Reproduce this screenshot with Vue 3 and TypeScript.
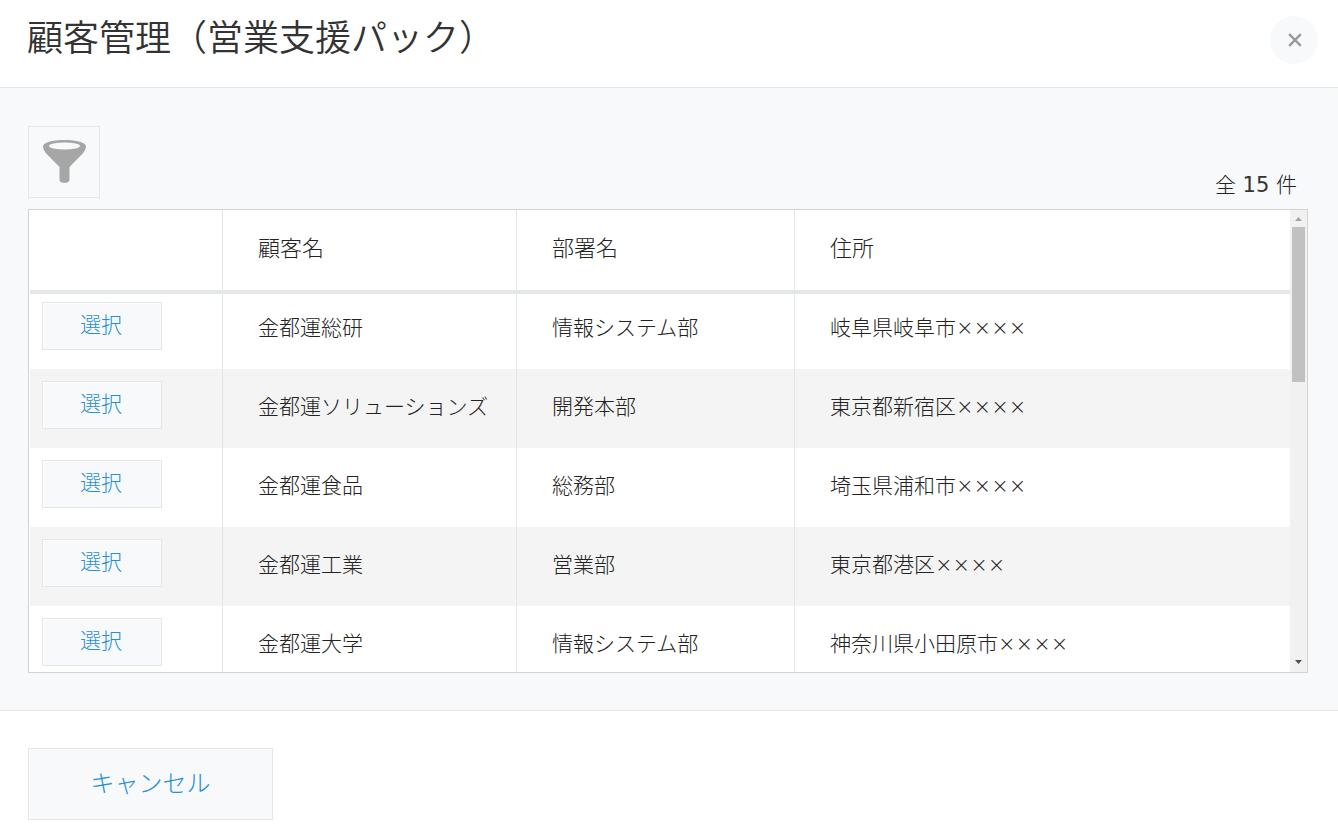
<script setup lang="ts">
interface Customer {
  name: string
  department: string
  address: string
}

const total = 15

const customers: Customer[] = [
  { name: '金都運総研', department: '情報システム部', address: '岐阜県岐阜市××××' },
  { name: '金都運ソリューションズ', department: '開発本部', address: '東京都新宿区××××' },
  { name: '金都運食品', department: '総務部', address: '埼玉県浦和市××××' },
  { name: '金都運工業', department: '営業部', address: '東京都港区××××' },
  { name: '金都運大学', department: '情報システム部', address: '神奈川県小田原市××××' },
]
</script>

<template>
  <div class="dialog">
    <header class="dialog-header">
      <h1 class="title">顧客管理（営業支援パック）</h1>
      <button class="close" type="button" aria-label="閉じる">
        <svg viewBox="0 0 14 14" width="14" height="14" aria-hidden="true">
          <path d="M1.2 1.2 L12.8 12.8 M12.8 1.2 L1.2 12.8" />
        </svg>
      </button>
    </header>

    <main class="dialog-body">
      <div class="toolbar">
        <button class="filter" type="button" aria-label="絞り込む">
          <svg viewBox="0 0 44 44" width="44" height="44" aria-hidden="true">
            <path
              fill="#a6a6a6"
              d="M1 6.5 C1 2.5 10 0 22.5 0 S44 2.5 44 6.5 C44 9 42.5 11.5 40.5 13.7 L27.5 27 V40 C27.5 43.8 17.5 43.8 17.5 40 V27 L4.5 13.7 C2.5 11.5 1 9 1 6.5 Z"
            />
            <ellipse cx="22.5" cy="6" rx="15.5" ry="3.4" fill="#f7f9fb" />
          </svg>
        </button>
        <p class="count">全 <span class="number">{{ total }}</span> 件</p>
      </div>

      <div class="table-frame">
        <div class="table-view">
          <table class="records">
            <colgroup>
              <col class="col-action" />
              <col class="col-name" />
              <col class="col-department" />
              <col />
            </colgroup>
            <thead>
              <tr>
                <th></th>
                <th scope="col">顧客名</th>
                <th scope="col">部署名</th>
                <th scope="col">住所</th>
              </tr>
            </thead>
            <tbody>
              <tr v-for="customer in customers" :key="customer.name">
                <td class="action"><button class="select" type="button">選択</button></td>
                <td>{{ customer.name }}</td>
                <td>{{ customer.department }}</td>
                <td>{{ customer.address }}</td>
              </tr>
            </tbody>
          </table>
        </div>
        <div class="scrollbar" aria-hidden="true">
          <svg class="arrow up" viewBox="0 0 17 17" width="17" height="17"><path d="M5 11 L8.5 7 L12 11 Z" /></svg>
          <div class="thumb"></div>
          <svg class="arrow down" viewBox="0 0 17 17" width="17" height="17"><path d="M5 5 L8.5 9 L12 5 Z" /></svg>
        </div>
      </div>
    </main>

    <footer class="dialog-footer">
      <button class="cancel" type="button">キャンセル</button>
    </footer>
  </div>
</template>

<style>
body {
  margin: 0;
  background: #fff;
}
</style>

<style scoped>
.dialog {
  color: #222;
  font-family: "DejaVu Sans", "Noto Sans CJK JP", sans-serif;
  font-size: 21px;
  font-weight: 300;
  line-height: 32px;
}

button {
  margin: 0;
  padding: 0;
  font: inherit;
  cursor: pointer;
}

.dialog-header {
  display: flex;
  justify-content: space-between;
  align-items: flex-start;
  height: 87px;
  padding: 0 20px 0 27px;
  border-bottom: 1px solid #e3e7e8;
}

.title {
  margin: 12px 0 0;
  color: #333;
  font-size: 36px;
  font-weight: 350;
  line-height: 54px;
}

.close {
  display: flex;
  justify-content: center;
  align-items: center;
  width: 48px;
  height: 48px;
  margin-top: 16px;
  padding-left: 2px;
  border: 0;
  border-radius: 50%;
  background: #f7f9fb;
}

.close path {
  fill: none;
  stroke: #999;
  stroke-width: 2.4;
}

.dialog-body {
  padding: 38px 30px 37px 28px;
  border-bottom: 1px solid #e3e7e8;
  background: #f7f9fb;
}

.toolbar {
  display: flex;
  justify-content: space-between;
  align-items: flex-end;
  margin-bottom: 11px;
}

.filter {
  display: flex;
  justify-content: center;
  align-items: center;
  width: 72px;
  height: 72px;
  border: 1px solid #e3e7e8;
  background: #f7f9fb;
}

.count {
  margin: 0 11px 0 0;
  line-height: 26px;
}

.number {
  color: #333;
  font-weight: 400;
}

.table-frame {
  display: flex;
  border: 1px solid #d0d4d7;
  background: #fff;
}

.table-view {
  flex: 1;
  height: 462px;
  padding-left: 1px;
  overflow: hidden;
}

.records {
  width: 100%;
  table-layout: fixed;
  border-spacing: 0;
}

.col-action {
  width: 193px;
}

.col-name {
  width: 294px;
}

.col-department {
  width: 278px;
}

th,
td {
  box-sizing: border-box;
  padding: 0 0 4px 35px;
  border-right: 1px solid #e3e7e8;
  text-align: left;
  white-space: nowrap;
}

th:last-child,
td:last-child {
  border-right: 0;
}

th {
  height: 80px;
  padding-bottom: 2px;
  font-size: 22px;
  font-weight: 300;
}

td {
  height: 79px;
}

tbody tr:first-child td {
  border-top: 4px solid #e3e7e8;
  padding-bottom: 8px;
}

tbody tr:nth-child(even) td {
  background: #f4f4f4;
}

tbody td.action,
tbody tr:first-child td.action {
  padding: 0 0 0 12px;
}

tbody td.action {
  vertical-align: top;
}

.select {
  display: block;
  width: 120px;
  height: 48px;
  margin-top: 12px;
  padding: 0 2px 2px 0;
  border: 1px solid #e3e7e8;
  background: #f7f9fb;
  box-shadow: inset 1px 1px 2px #fff;
  color: #268fd6;
}

tbody tr:first-child .select {
  margin-top: 8px;
}

.scrollbar {
  display: flex;
  flex-direction: column;
  width: 17px;
  background: #f1f1f1;
}

.arrow {
  display: block;
}

.up {
  fill: #a3a3a3;
}

.down {
  margin-top: auto;
  fill: #505050;
}

.thumb {
  height: 155px;
  margin: 0 2px;
  background: #c1c1c1;
}

.dialog-footer {
  padding: 37px 28px 4px;
}

.cancel {
  width: 245px;
  height: 72px;
  border: 1px solid #e3e7e8;
  background: #f7f9fb;
  box-shadow: inset 1px 1px 2px #fff;
  color: #268fd6;
  font-size: 24px;
}
</style>
